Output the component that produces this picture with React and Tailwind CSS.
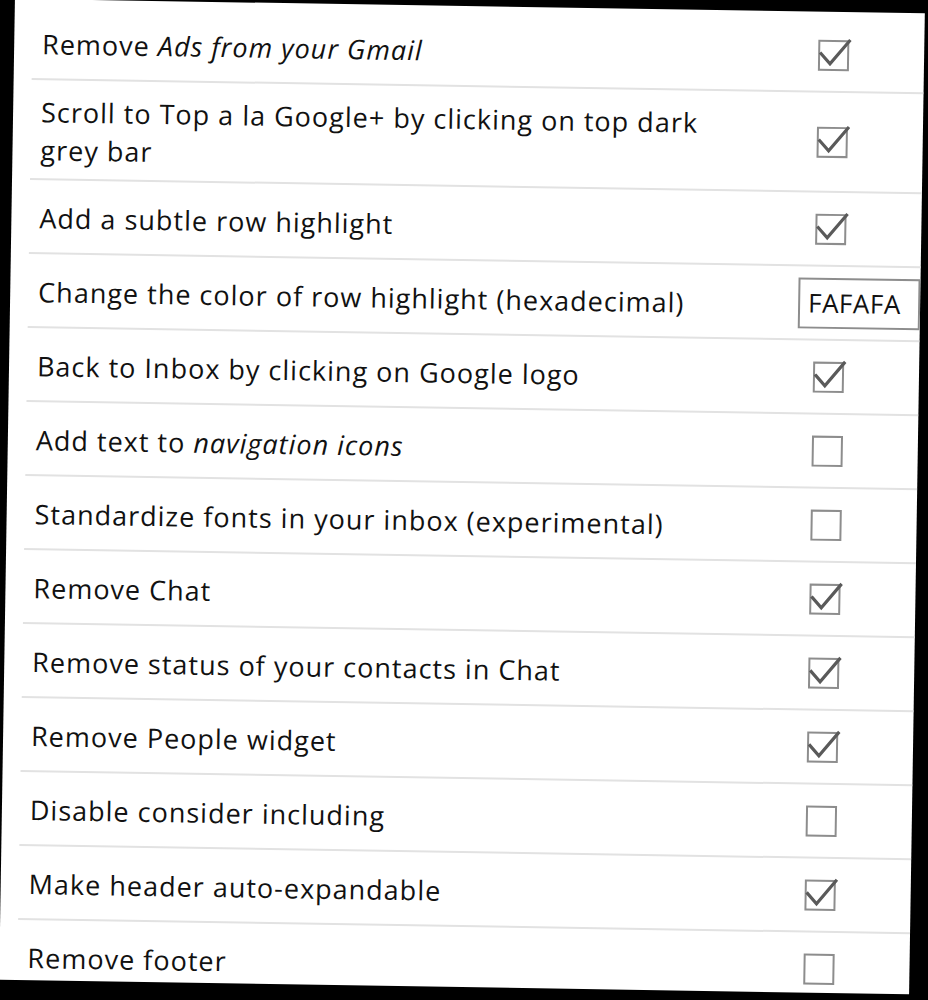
import React from "react";

const rows = [
    { label: <>Remove <span className="italic">Ads from your Gmail</span></>, kind: "on" },
    { label: <>Scroll to Top a la Google+ by clicking on top dark<br />grey bar</>, kind: "on", tall: true },
    { label: "Add a subtle row highlight", kind: "on" },
    { label: "Change the color of row highlight (hexadecimal)", kind: "input" },
    { label: "Back to Inbox by clicking on Google logo", kind: "on" },
    { label: <>Add text to <span className="italic">navigation icons</span></>, kind: "off" },
    { label: "Standardize fonts in your inbox (experimental)", kind: "off" },
    { label: "Remove Chat", kind: "on" },
    { label: "Remove status of your contacts in Chat", kind: "on" },
    { label: "Remove People widget", kind: "on" },
    { label: "Disable consider including", kind: "off" },
    { label: "Make header auto-expandable", kind: "on" },
    { label: "Remove footer", kind: "off" },
];

function Checkbox({ checked }) {
    return (
        <div className="relative w-[31px] h-[31px] border-2 border-[#8d8d8d] bg-white">
            {checked && (
                <svg
                    className="absolute left-[-2px] top-[-2px] w-[31px] h-[31px] overflow-visible"
                    viewBox="0 0 31 31"
                    fill="none"
                >
                    <path
                        d="M3 14 L12 24 L31 1"
                        stroke="#5a5a5a"
                        strokeWidth="3.2"
                        strokeLinecap="square"
                        strokeLinejoin="miter"
                    />
                </svg>
            )}
        </div>
    );
}

export default function App() {
    return (
        <div
            className="w-[928px] h-[1000px] bg-black overflow-hidden pt-[6px] pl-[7px]"
            style={{ fontFamily: '"Open Sans", "Noto Sans", sans-serif' }}
        >
            <div className="w-[910px] h-[981px] bg-white rotate-[0.92deg] overflow-hidden pt-[7px]">
                {rows.map((row, i) => (
                    <div key={i}>
                        <div className={`flex items-center ${row.tall ? "h-[98px]" : "h-[72px]"}`}>
                            <div className="flex-1 pl-[28px] pt-[4px] text-[27px] leading-[38px] text-[#111] tracking-[1px]">
                                {row.label}
                            </div>
                            <div className="w-[122px] flex items-center">
                                {row.kind === "input" ? (
                                    <div className="w-[140px] h-[51px] border-2 border-[#8d8d8d] flex items-center pl-[8px] text-[26px] tracking-[0.5px] text-[#111]">
                                        FAFAFA
                                    </div>
                                ) : (
                                    <div className="ml-[16px]">
                                        <Checkbox checked={row.kind === "on"} />
                                    </div>
                                )}
                            </div>
                        </div>
                        {i < rows.length - 1 && <div className="ml-[18px] h-[2px] bg-[#e2e2e2]" />}
                    </div>
                ))}
            </div>
        </div>
    );
}
